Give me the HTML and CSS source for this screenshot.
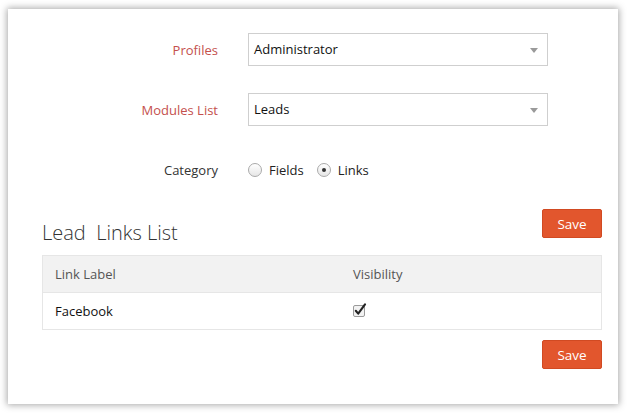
FILE: index.html
```html
<!DOCTYPE html>
<html>
<head>
<meta charset="utf-8">
<link rel="stylesheet" href="styles.css">
</head>
<body>
<div class="card">
  <div class="form">
    <div class="label req">Profiles</div>
    <div class="select"><span>Administrator</span><i class="caret"></i></div>
    <div class="label req">Modules List</div>
    <div class="select"><span>Leads</span><i class="caret"></i></div>
    <div class="label">Category</div>
    <div class="radios">
      <span class="radio"></span><span class="rlabel">Fields</span>
      <span class="radio on"></span><span class="rlabel">Links</span>
    </div>
  </div>
  <div class="head">
    <h2>Lead&nbsp; Links List</h2>
    <button class="save">Save</button>
  </div>
  <div class="table">
    <div class="tr th"><div class="c1">Link Label</div><div class="c2">Visibility</div></div>
    <div class="tr"><div class="c1 dark">Facebook</div><div class="c2">
      <svg class="check" width="14" height="15" viewBox="0 0 14 15">
        <rect x="0.5" y="2.5" width="11" height="11" rx="1.5" fill="#f2f2f2" stroke="#9a9a9a"/>
        <path d="M2.8 7.8 L5.2 10.6 L12 1.4" fill="none" stroke="#222" stroke-width="2.1" stroke-linecap="round" stroke-linejoin="round"/>
      </svg>
    </div></div>
  </div>
  <div class="foot"><button class="save">Save</button></div>
</div>
</body>
</html>
```
FILE: styles.css
```css
html, body { margin: 0; padding: 0; background: #fff; }
body {
  padding: 9px 9px 9px 8px;
  font-family: "Open Sans", "Liberation Sans", sans-serif;
  font-size: 13px;
  color: #222;
}
.card {
  width: 610px;
  height: 395px;
  box-sizing: border-box;
  background: #fff;
  box-shadow: 0 0 7px 1px rgba(0,0,0,0.35);
  padding: 24px 16px 0 34px;
}
.form {
  display: grid;
  grid-template-columns: 176px 300px;
  column-gap: 30px;
  row-gap: 27px;
  align-items: center;
}
.label { text-align: right; color: #333; }
.label.req { color: #c4504d; }
.select {
  height: 33px;
  box-sizing: border-box;
  border: 1px solid #cfcfcf;
  display: flex;
  align-items: center;
  justify-content: space-between;
  padding: 0 9px 1px 5px;
  color: #111;
  font-size: 13px;
}
.caret {
  width: 0; height: 0;
  border-left: 4.5px solid transparent;
  border-right: 4.5px solid transparent;
  border-top: 5px solid #9a9a9a;
  margin-top: 3px;
}
.form .label:nth-of-type(5) { margin-top: 7px; }
.radios { display: flex; align-items: center; height: 20px; margin-top: 7px; }
.radio {
  width: 12px; height: 12px;
  border-radius: 50%;
  border: 1px solid #aaa;
  background: linear-gradient(#fff, #e6e6e6);
  display: inline-flex; align-items: center; justify-content: center;
  margin-right: 7px;
}
.radio.on::after { content: ""; width: 4px; height: 4px; border-radius: 50%; background: #333; }
.rlabel { margin-right: 13px; }
.head {
  display: flex;
  justify-content: space-between;
  align-items: flex-start;
  margin-top: 29px;
}
h2 {
  margin: 12px 0 0;
  font-weight: 300;
  font-size: 20px;
  color: #333;
  line-height: 24px;
}
.save {
  width: 60px; height: 29px;
  background: #e2562d;
  border: 1px solid #d14a22;
  border-radius: 2px;
  color: #fff;
  font-family: "Open Sans", "Liberation Sans", sans-serif;
  font-size: 13.5px;
  padding: 0;
}
.table {
  margin-top: 10px;
  border: 1px solid #e6e6e6;
}
.tr { display: flex; height: 36px; align-items: center; }
.th { background: #f2f2f2; border-bottom: 1px solid #e6e6e6; color: #555; }
.c1 { width: 298px; padding-left: 12px; box-sizing: border-box; }
.c2 { padding-left: 12px; display: flex; align-items: center; }
.dark { color: #111; }
.check { margin-top: -2px; }
.foot { display: flex; justify-content: flex-end; margin-top: 10px; }
```
